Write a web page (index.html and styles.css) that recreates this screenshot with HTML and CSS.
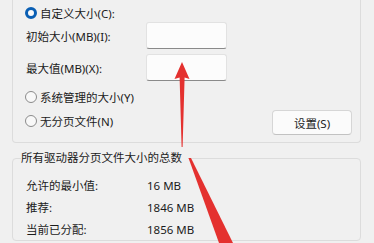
FILE: index.html
```html
<!DOCTYPE html>
<html lang="zh-CN">

<head>
  <meta charset="UTF-8" />
  <title>虚拟内存</title>
  <link rel="stylesheet" href="styles.css">
</head>

<body>

  <!-- 每个驱动器的分页文件大小 -->
  <div class="group-top">
    <div class="row row-first">
      <span class="radio checked"></span>
      <span class="radio-text">自定义大小(C):</span>
    </div>

    <div class="row field">
      <span class="label">初始大小(MB)(I):</span>
      <span class="input"></span>
    </div>

    <div class="row field field-2">
      <span class="label">最大值(MB)(X):</span>
      <span class="input"></span>
    </div>

    <div class="row row-radio">
      <span class="radio"></span>
      <span class="radio-text">系统管理的大小(Y)</span>
    </div>

    <div class="row row-last">
      <div class="radio-wrap">
        <span class="radio"></span>
        <span class="radio-text">无分页文件(N)</span>
      </div>
      <button class="btn-set">设置(S)</button>
    </div>
  </div>

  <!-- 所有驱动器的总数 -->
  <fieldset class="group-total">
    <legend>所有驱动器分页文件大小的总数</legend>
    <div class="stat"><span class="stat-name">允许的最小值:</span><span>16 MB</span></div>
    <div class="stat"><span class="stat-name">推荐:</span><span>1846 MB</span></div>
    <div class="stat"><span class="stat-name">当前已分配:</span><span>1856 MB</span></div>
  </fieldset>

  <!-- 红色标注箭头 -->
  <svg class="arrows" width="374" height="243" viewBox="0 0 374 243">
    <path d="M182 62 L189.5 79 L184.6 77.5 L182.6 147 L181.6 147 L179.6 77.5 L174.5 79 Z" fill="#e4312f" />
    <path d="M188.5 158 L191 158 L233 243 L219 243 Z" fill="#e4312f" />
  </svg>

</body>

</html>
```

FILE: styles.css
```css
body {
  margin: 0;
  width: 374px;
  height: 243px;
  overflow: hidden;
  background: #f0f0f0;
  font-family: "Noto Sans", "Noto Sans CJK SC", sans-serif;
  font-size: 11.5px;
  color: #1b1b1b;
  position: relative;
}

.group-top {
  margin-left: 12px;
  width: 327px;
  padding: 0 8px 7px 12px;
  border: 1px solid #dcdcdc;
  border-top: none;
  border-radius: 0 0 4px 4px;
  display: flex;
  flex-direction: column;
}

.row {
  display: flex;
  align-items: center;
}

.row-first {
  margin-top: 4px;
  height: 18px;
}

.field {
  height: 27px;
}

.field-2 {
  margin-top: 5px;
}

.row-radio {
  margin-top: 5px;
  height: 22px;
}

.row-last {
  margin-top: 2px;
  height: 25px;
}

.radio-wrap {
  display: flex;
  align-items: center;
  margin-top: -3px;
}

.radio {
  width: 10px;
  height: 10px;
  border: 1px solid #8b8b8b;
  border-radius: 50%;
  background: #f8f8f8;
  flex-shrink: 0;
}

.radio.checked {
  width: 6px;
  height: 6px;
  border: 3px solid #0a5fb4;
  background: #fafafa;
}

.radio-text {
  margin-left: 3px;
}

.label {
  width: 120px;
  margin-left: 1px;
}

.input {
  width: 79px;
  height: 25px;
  background: #fcfcfc;
  border: 1px solid #e2e2e2;
  border-bottom-color: #8a8a8a;
  border-radius: 3px;
}

.btn-set {
  flex: 0 0 80px;
  box-sizing: border-box;
  width: 80px;
  height: 25px;
  margin-left: auto;
  background: #fbfbfb;
  border: 1px solid #d6d6d6;
  border-bottom-color: #c2c2c2;
  border-radius: 4px;
  font: inherit;
  color: #1b1b1b;
  padding: 0;
}

.group-total {
  margin: 7px 0 0 12px;
  width: 349px;
  box-sizing: border-box;
  padding: 8px 0 0 0;
  border: 1px solid #dcdcdc;
  border-radius: 4px;
}

.group-total legend {
  margin-left: 8px;
  padding: 0 6px 0 0;
  line-height: 16px;
}

.stat {
  display: flex;
  align-items: center;
  height: 22px;
  padding-left: 13px;
}

.stat-name {
  width: 121px;
}

.arrows {
  position: absolute;
  left: 0;
  top: 0;
  pointer-events: none;
}
```
